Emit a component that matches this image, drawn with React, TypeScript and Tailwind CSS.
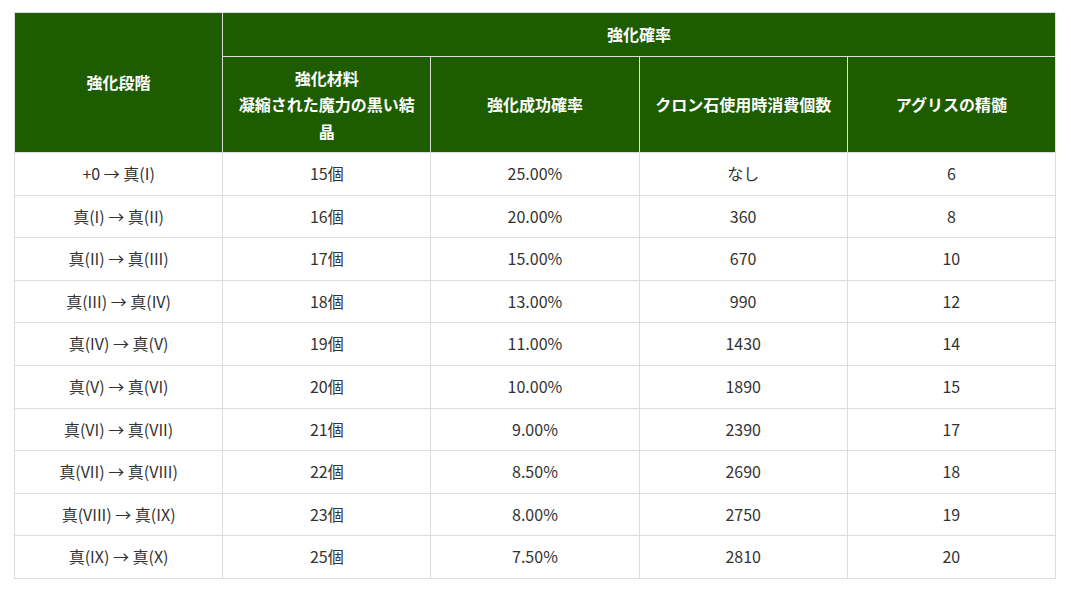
const rows: [string, string, string, string, string][] = [
    ['+0 → 真(I)', '15個', '25.00%', 'なし', '6'],
    ['真(I) → 真(II)', '16個', '20.00%', '360', '8'],
    ['真(II) → 真(III)', '17個', '15.00%', '670', '10'],
    ['真(III) → 真(IV)', '18個', '13.00%', '990', '12'],
    ['真(IV) → 真(V)', '19個', '11.00%', '1430', '14'],
    ['真(V) → 真(VI)', '20個', '10.00%', '1890', '15'],
    ['真(VI) → 真(VII)', '21個', '9.00%', '2390', '17'],
    ['真(VII) → 真(VIII)', '22個', '8.50%', '2690', '18'],
    ['真(VIII) → 真(IX)', '23個', '8.00%', '2750', '19'],
    ['真(IX) → 真(X)', '25個', '7.50%', '2810', '20'],
];

const th = 'border border-[#dddddd] bg-[#1d5c00] px-3 py-2 font-bold leading-[26.5px] text-white';
const td = 'border border-[#dddddd] px-3 py-2 text-[#333333]';

export default function App() {
    return (
        <div className="min-h-screen bg-white pl-[14px] pt-[12px] font-['Noto_Sans_CJK_JP',sans-serif] text-[16px] leading-[1.6]">
            <table className="w-[1042px] table-fixed border-collapse text-center">
                <thead>
                    <tr>
                        <th rowSpan={2} className={th}>
                            強化段階
                        </th>
                        <th colSpan={4} className={th}>
                            強化確率
                        </th>
                    </tr>
                    <tr>
                        <th className={th}>
                            強化材料
                            <br />
                            凝縮された魔力の黒い結晶
                        </th>
                        <th className={th}>強化成功確率</th>
                        <th className={th}>クロン石使用時消費個数</th>
                        <th className={th}>アグリスの精髄</th>
                    </tr>
                </thead>
                <tbody>
                    {rows.map((r) => (
                        <tr key={r[0]}>
                            {r.map((c, i) => (
                                <td key={i} className={td}>
                                    {c}
                                </td>
                            ))}
                        </tr>
                    ))}
                </tbody>
            </table>
        </div>
    );
}
